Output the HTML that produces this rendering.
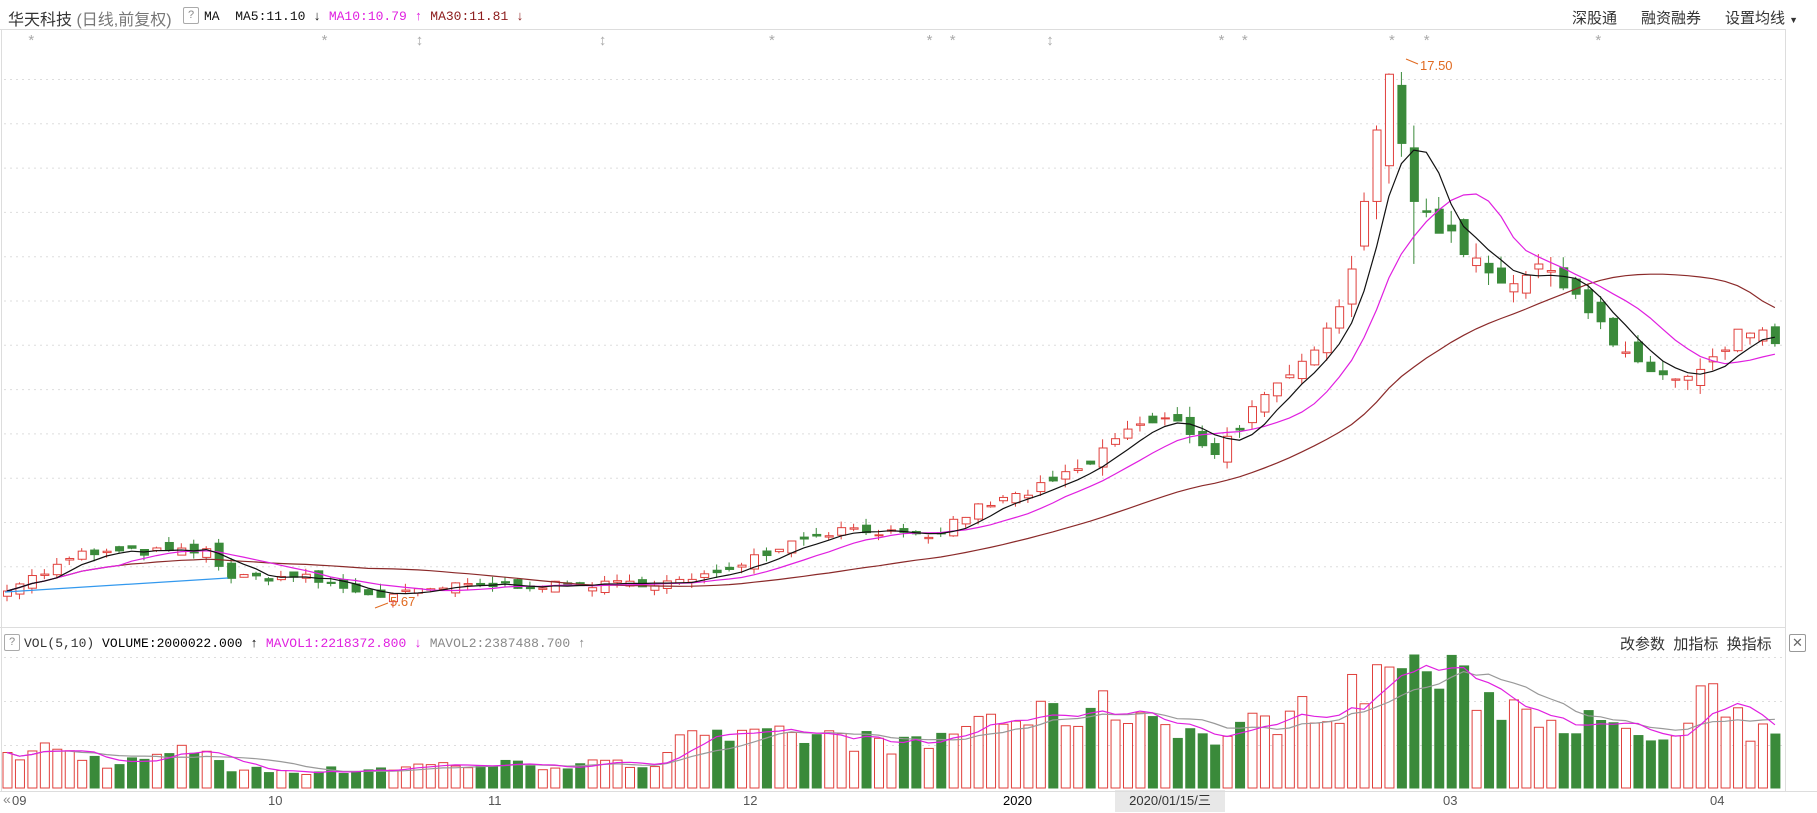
<!DOCTYPE html>
<html><head><meta charset="utf-8"><style>
body{margin:0;width:1817px;height:813px;background:#fff;overflow:hidden;position:relative;font-family:"Liberation Sans","Noto Sans CJK SC",sans-serif}
.t{position:absolute;white-space:nowrap}
.m{font-family:"Liberation Mono","Noto Sans CJK SC",monospace;font-size:13px}
.q{position:absolute;width:14px;height:15px;border:1px solid #aaa;border-radius:2px;font-size:11px;color:#888;text-align:center;line-height:15px}
</style></head><body>
<div class="t" style="left:8px;top:6px;font-size:16px;color:#333">华天科技 <span style="color:#777">(日线,前复权)</span></div>
<div class="q" style="left:183px;top:7px">?</div>
<div class="t m" style="left:204px;top:9px;color:#111">MA&nbsp; MA5:11.10 ↓ <span style="color:#e020e0">MA10:10.79 ↑</span> <span style="color:#8b1a1a">MA30:11.81 ↓</span></div>
<div class="t" style="left:1572px;top:7px;font-size:15px;color:#333">深股通</div>
<div class="t" style="left:1641px;top:7px;font-size:15px;color:#333">融资融券</div>
<div class="t" style="left:1725px;top:7px;font-size:15px;color:#333">设置均线 <span style="font-size:9px">▼</span></div>
<div class="q" style="left:4px;top:634px">?</div>
<div class="t m" style="left:24px;top:636px;color:#333">VOL(5,10) <span style="color:#000">VOLUME:2000022.000 ↑</span> <span style="color:#e020e0">MAVOL1:2218372.800 ↓</span> <span style="color:#888">MAVOL2:2387488.700 ↑</span></div>
<div class="t" style="left:1620px;top:633px;font-size:15px;color:#333">改参数&nbsp;&nbsp;加指标&nbsp;&nbsp;换指标</div>
<div class="t" style="left:1789px;top:634px;width:15px;height:16px;border:1px solid #999;border-radius:2px;font-size:13px;color:#666;text-align:center;line-height:16px">✕</div>
<div class="t" style="left:3px;top:791px;font-size:14px;color:#888">«</div>
<div class="t" style="left:12px;top:793px;font-size:13px;color:#555">09</div>
<div class="t" style="left:268px;top:793px;font-size:13px;color:#555">10</div>
<div class="t" style="left:488px;top:793px;font-size:13px;color:#555">11</div>
<div class="t" style="left:743px;top:793px;font-size:13px;color:#555">12</div>
<div class="t" style="left:1003px;top:793px;font-size:13px;color:#000">2020</div>
<div class="t" style="left:1115px;top:790px;width:110px;height:22px;background:#e8e8e8;font-size:13px;color:#333;line-height:22px;text-align:center">2020/01/15/三</div>
<div class="t" style="left:1443px;top:793px;font-size:13px;color:#555">03</div>
<div class="t" style="left:1710px;top:793px;font-size:13px;color:#555">04</div>
<svg id="s" width="1817" height="813" style="position:absolute;left:0;top:0;pointer-events:none"></svg>
<script>
var S=1.159,svg=document.getElementById('s'),o='';
function L(x1,y1,x2,y2,c,w,d){o+='<line x1="'+x1+'" y1="'+y1+'" x2="'+x2+'" y2="'+y2+'" stroke="'+c+'" stroke-width="'+(w||1)+'"'+(d?' stroke-dasharray="'+d+'"':'')+'/>';}
L(0,29.5,1785,29.5,'#ddd');L(0,627.5,1785,627.5,'#ddd');L(0,791.5,1817,791.5,'#ddd');L(1785.5,29,1785.5,791,'#ddd');L(1.5,29,1.5,791,'#ddd');
for(var k=0;k<12;k++){var y=79.5+k*44.3;L(4,y,1783,y,'#ddd',1,'2 4');}
[657,701,745].forEach(function(y){L(4,y+.5,1783,y+.5,'#ddd',1,'2 4');});
var stars=[27,280,362,520,666,802,822,906,1054,1074,1201,1231,1379],ud=[362,520,906];
stars.forEach(function(x){o+='<text x="'+(x*S)+'" y="45" font-size="15" fill="#aaa" text-anchor="middle" font-family="Liberation Sans">'+(ud.indexOf(x)>=0?'↕':'*')+'</text>';});
var kp=[[5,5.95],[40,6.3],[70,6.7],[120,6.75],[180,6.75],[200,6.15],[260,6.2],[300,5.9],[330,5.75],[400,6.0],[500,6.0],[600,6.1],[640,6.55],[700,7.15],[740,7.3],[800,7.0],[840,7.7],[900,8.2],[940,8.7],[970,9.5],[1010,9.7],[1035,9.3],[1045,8.9],[1080,9.9],[1120,10.8],[1160,12.6],[1185,14.4],[1200,16.9],[1210,15.9],[1232,14.3],[1265,13.5],[1300,12.8],[1340,13.1],[1365,12.4],[1400,11.1],[1450,10.55],[1470,10.8],[1500,11.6],[1520,11.8],[1535,11.2]];
var vk=[[5,25],[40,35],[100,20],[180,35],[200,15],[300,15],[370,20],[440,20],[560,20],[600,60],[620,40],[700,45],[800,35],[840,60],[900,60],[960,70],[1020,55],[1040,40],[1100,60],[1160,75],[1200,108],[1230,105],[1260,88],[1300,72],[1350,62],[1400,45],[1450,40],[1470,80],[1490,60],[1535,40]];
function interp(a,x){for(var i=1;i<a.length;i++){if(x<=a[i][0]){var t=(x-a[i-1][0])/(a[i][0]-a[i-1][0]);return a[i-1][1]+t*(a[i][1]-a[i-1][1]);}}return a[a.length-1][1];}
var seed=7;function R(){seed=(seed*16807)%2147483647;return seed/2147483647;}
var n=143,cs=[],xs=[],vs=[];
function Y(p){return 72+(17.5-p)*44.63;}
for(var i=0;i<n;i++){var x=7+i*12.45;xs.push(x);var dx=x/S;var c=interp(kp,dx)*(1+(R()-.5)*.03);cs.push(c);vs.push(Math.min(133,interp(vk,dx)*S*(0.75+R()*0.5)));}
var ov={109:[13.6,14.6,14.8,13.5],110:[14.6,16.2,16.3,14.2],111:[15.4,17.45,17.47,15.0],112:[17.2,15.9,17.5,15.6],113:[15.8,14.6,16.3,13.2]};
cs[109]=14.6;cs[110]=16.2;cs[111]=17.45;cs[112]=15.9;cs[113]=14.6;
for(var i=0;i<n;i++){var c=cs[i],op=i?cs[i-1]*(1+(R()-.5)*.04):c*0.98;if(i>0&&Math.abs(op-c)<0.02)op=c-0.03;
var hi=Math.max(op,c)*(1+R()*.025),lo=Math.min(op,c)*(1-R()*.025);
if(ov[i]){op=ov[i][0];hi=ov[i][2];lo=ov[i][3];}
var u=c>op;
var col=u?'#e0403c':'#3a8a3a',x=xs[i];
L(x,Y(hi),x,Y(Math.max(op,c)),col);L(x,Y(Math.min(op,c)),x,Y(lo),col);
var t=Y(Math.max(op,c)),h=Math.max(1,Y(Math.min(op,c))-t);
o+='<rect x="'+(x-3.5)+'" y="'+t+'" width="8" height="'+h+'" fill="'+(u?'#fff':col)+'" stroke="'+col+'" stroke-width="1"/>';
var vh=vs[i];o+='<rect x="'+(x-4)+'" y="'+(788-vh)+'" width="9" height="'+vh+'" fill="'+(u?'#fff':'#3a8a3a')+'" stroke="'+col+'" stroke-width="1"/>';}
function ma(arr,p,f,col){var pts=[];for(var i=0;i<arr.length;i++){var s=0,m=Math.min(p,i+1);for(var j=0;j<m;j++)s+=arr[i-j];pts.push(xs[i].toFixed(1)+','+f(s/m).toFixed(1));}o+='<polyline points="'+pts.join(' ')+'" fill="none" stroke="'+col+'" stroke-width="1.2"/>';}
ma(cs,30,Y,'#8b2a2a');ma(cs,10,Y,'#e020e0');ma(cs,5,Y,'#111');
ma(vs,10,function(v){return 788-v;},'#999');ma(vs,5,function(v){return 788-v;},'#e020e0');
L(5,592,228,578,'#3399ee',1.3);
o+='<text x="1420" y="70" font-size="13" fill="#e06a20" font-family="Liberation Sans">17.50</text>';L(1406,59,1418,64,'#e06a20');
o+='<text x="390" y="606" font-size="13" fill="#e06a20" font-family="Liberation Sans">5.67</text>';L(375,608,388,603,'#e06a20');
svg.innerHTML=o;
</script>
</body></html>
